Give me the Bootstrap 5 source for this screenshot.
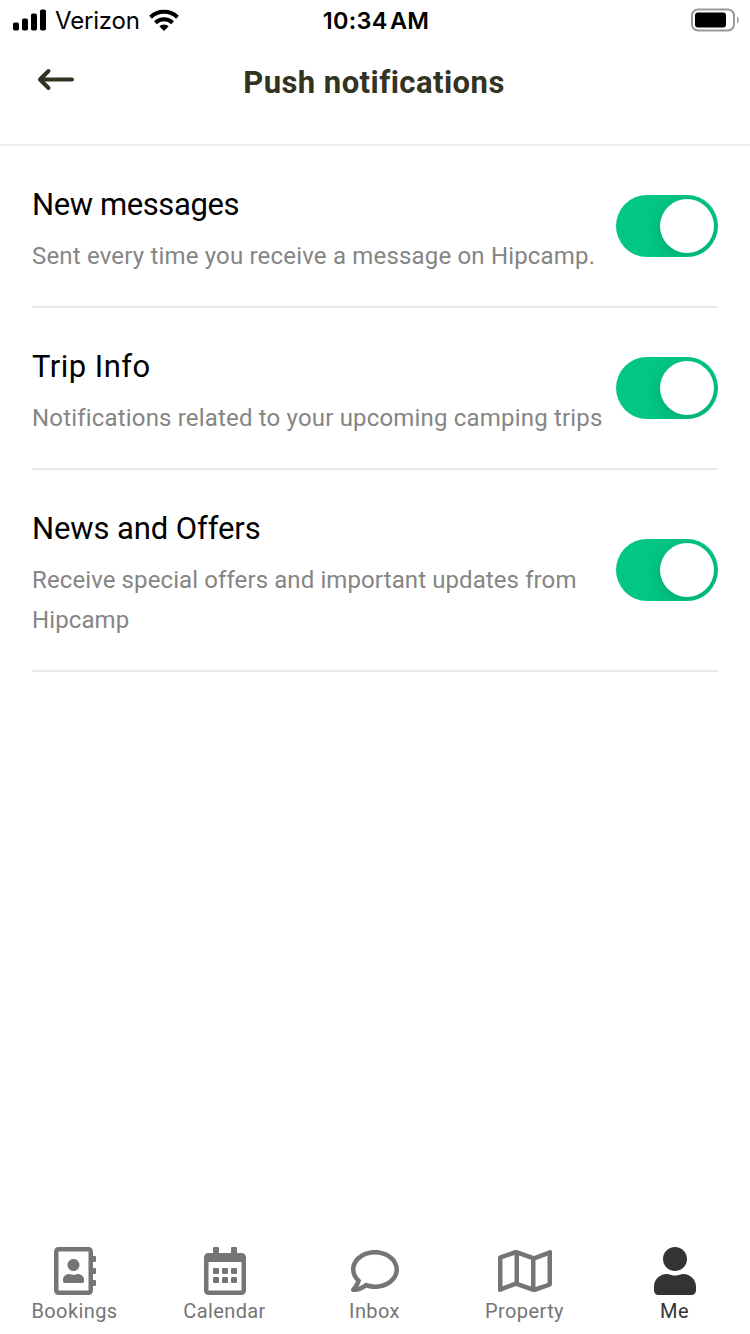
<!DOCTYPE html>
<html lang="en">
<head>
<meta charset="utf-8">
<meta name="viewport" content="width=device-width, initial-scale=1">
<title>Push notifications</title>
<link href="https://cdn.jsdelivr.net/npm/bootstrap@5.3.0/dist/css/bootstrap.min.css" rel="stylesheet">
<style>
  body { font-family: Roboto, "Liberation Sans", sans-serif; color: #000; background: #fff; }
  svg { display: block; }
  .status-bar { height: 40px; padding: 0 11px 0 13px; font-family: Inter, sans-serif; font-size: 24px; line-height: 38px; }
  .status-side { flex: 1 1 0; }
  .carrier { margin-left: 9px; margin-right: 9px; padding-top: 2px; letter-spacing: -.2px; }
  .clock { font-weight: 600; font-size: 23.500px; letter-spacing: .3px; word-spacing: -4px; padding-top: 2px; }
  .app-header { height: 106px; border-bottom: 2px solid #eeeee9; padding: 20px 32px 0; color: #333322; }
  .header-side { width: 80px; padding: 8px 0 0 5px; }
  .app-title { font-size: 31px; line-height: 46px; font-weight: 700; letter-spacing: .45px; margin: 0; position: relative; left: -1px; }
  .settings { padding: 0 32px; }
  .setting { padding: 30px 0; border-bottom: 2px solid #e9e9e9; }
  .setting-name { font-size: 31px; line-height: 58px; font-weight: 400; letter-spacing: -.1px; margin: 0 0 2px; }
  .name-messages { letter-spacing: -.4px; }
  .name-trip { letter-spacing: .45px; }
  .setting-note { font-size: 24px; line-height: 40px; color: #858585; letter-spacing: .18px; margin: 0; }
  .note-offers { letter-spacing: .1px; }
  .switch-btn { width: 102px; height: 62px; border: 0; border-radius: 31px; padding: 4px; background: #02c684; overflow: hidden; }
  .switch-knob { display: block; width: 54px; height: 54px; margin-left: 40px; border-radius: 50%; background: #fff; box-shadow: 0 4px 16px rgba(0,0,0,.15); }
  .tab-bar { height: 87px; color: #757575; }
  .tab-item { flex: 1 1 0; color: inherit; text-decoration: none; font-size: 20px; line-height: 32px; letter-spacing: .4px; }
  .tab-item span { margin-right: 1px; }
  .tab-item.active { color: #333; }
  .tab-item svg { height: 48px; fill: currentColor; }
</style>
</head>
<body>
<div class="d-flex flex-column vh-100">
  <div class="status-bar d-flex align-items-center">
    <div class="status-side d-flex align-items-center">
      <svg width="33" height="22" viewBox="0 0 33 22"><rect y="13.500" width="6" height="8" rx="1.800"/><rect x="9" y="9.500" width="6" height="12" rx="1.800"/><rect x="18" y="4.500" width="6" height="17" rx="1.800"/><rect x="27" y=".5" width="6" height="21" rx="1.800"/></svg>
      <span class="carrier">Verizon</span>
      <svg width="30" height="22" viewBox="0 0 30 22"><g fill="none" stroke="#000" stroke-width="4"><path d="M1.500 8.300a19.500 19.500 0 0 1 27 0"/><path d="M6.400 13.700a12.300 12.300 0 0 1 17.200 0"/></g><path d="M10.300 17.300a6.800 6.800 0 0 1 9.400 0L15 22z"/></svg>
    </div>
    <div class="clock">10:34 AM</div>
    <div class="status-side d-flex justify-content-end">
      <svg width="48" height="24" viewBox="0 0 48 24"><rect x="1" y="1.500" width="42" height="21" rx="6" fill="none" stroke="#999" stroke-width="2"/><rect x="4" y="4.500" width="31" height="15" rx="3"/><path d="M46 8.500c2.300 1 2.300 6 0 7z" fill="#999"/></svg>
    </div>
  </div>

  <header class="app-header d-flex justify-content-between align-items-start">
    <div class="header-side">
      <svg width="38" height="23" viewBox="0 0 38 23" fill="none" stroke="#333322" stroke-width="4" stroke-linecap="round" stroke-linejoin="round"><path d="M35 11.500H3M11.500 3 3 11.500l8.500 8.500"/></svg>
    </div>
    <h1 class="app-title">Push notifications</h1>
    <div class="header-side"></div>
  </header>

  <main class="settings flex-grow-1">
    <section class="setting d-flex align-items-center justify-content-between">
      <div><h2 class="setting-name name-messages">New messages</h2><p class="setting-note">Sent every time you receive a message on Hipcamp.</p></div>
      <button class="switch-btn flex-shrink-0" type="button" role="switch" aria-checked="true" aria-label="New messages"><span class="switch-knob"></span></button>
    </section>
    <section class="setting d-flex align-items-center justify-content-between">
      <div><h2 class="setting-name name-trip">Trip Info</h2><p class="setting-note">Notifications related to your upcoming camping trips</p></div>
      <button class="switch-btn flex-shrink-0" type="button" role="switch" aria-checked="true" aria-label="Trip Info"><span class="switch-knob"></span></button>
    </section>
    <section class="setting d-flex align-items-center justify-content-between">
      <div><h2 class="setting-name">News and Offers</h2><p class="setting-note note-offers">Receive special offers and important updates from<br>Hipcamp</p></div>
      <button class="switch-btn flex-shrink-0" type="button" role="switch" aria-checked="true" aria-label="News and Offers"><span class="switch-knob"></span></button>
    </section>
  </main>

  <nav class="tab-bar d-flex flex-shrink-0">
    <a class="tab-item d-flex flex-column align-items-center" href="#">
      <svg viewBox="0 0 448 512"><path d="M436 160c6.600 0 12-5.400 12-12v-40c0-6.600-5.400-12-12-12h-20V48c0-26.500-21.500-48-48-48H48C21.500 0 0 21.500 0 48v416c0 26.500 21.500 48 48 48h320c26.500 0 48-21.500 48-48v-48h20c6.600 0 12-5.400 12-12v-40c0-6.600-5.400-12-12-12h-20v-64h20c6.600 0 12-5.400 12-12v-40c0-6.600-5.400-12-12-12h-20v-64h20zm-68 304H48V48h320v416zM208 256c35.300 0 64-28.700 64-64s-28.700-64-64-64-64 28.700-64 64 28.700 64 64 64zm-89.600 128h179.200c12.400 0 22.400-8.600 22.400-19.200v-19.200c0-31.800-30.100-57.600-67.200-57.600-10.800 0-18.700 8-44.800 8-26.900 0-33.400-8-44.800-8-37.100 0-67.200 25.800-67.200 57.600v19.200c0 10.600 10 19.200 22.400 19.200z"/></svg>
      <span>Bookings</span>
    </a>
    <a class="tab-item d-flex flex-column align-items-center" href="#">
      <svg viewBox="0 0 448 512"><path d="M448 112v352c0 26.500-21.500 48-48 48H48c-26.500 0-48-21.500-48-48V112c0-26.500 21.500-48 48-48h48V12c0-6.600 5.400-12 12-12h40c6.600 0 12 5.400 12 12v52h128V12c0-6.600 5.400-12 12-12h40c6.600 0 12 5.400 12 12v52h48c26.500 0 48 21.500 48 48zm-48 346V160H48v298c0 3.300 2.700 6 6 6h340c3.300 0 6-2.700 6-6z"/><rect x="96" y="224" width="64" height="64" rx="12"/><rect x="192" y="224" width="64" height="64" rx="12"/><rect x="288" y="224" width="64" height="64" rx="12"/><rect x="96" y="320" width="64" height="64" rx="12"/><rect x="192" y="320" width="64" height="64" rx="12"/><rect x="288" y="320" width="64" height="64" rx="12"/></svg>
      <span>Calendar</span>
    </a>
    <a class="tab-item d-flex flex-column align-items-center" href="#">
      <svg viewBox="0 0 512 512"><path d="M256 32C114.600 32 0 125.100 0 240c0 47.600 19.900 91.200 52.900 126.300C38 405.700 7 439.100 6.500 439.500c-6.600 7-8.400 17.200-4.600 26S14.400 480 24 480c61.500 0 110-25.700 139.100-46.300C192 442.800 223.200 448 256 448c141.400 0 256-93.100 256-208S397.400 32 256 32zm0 368c-26.700 0-53.100-4.100-78.400-12.100l-22.700-7.200-19.500 13.800c-14.300 10.100-33.900 21.400-57.500 29 7.300-12.100 14.400-25.700 19.900-40.200l10.600-28.100-20.600-21.800C69.700 314.100 48 282.200 48 240c0-88.200 93.300-160 208-160s208 71.800 208 160-93.300 160-208 160z"/></svg>
      <span>Inbox</span>
    </a>
    <a class="tab-item d-flex flex-column align-items-center" href="#">
      <svg viewBox="0 0 576 512"><path d="M560.020 32c-1.960 0-3.980.370-5.960 1.160L384.010 96H384L212 35.280A64.252 64.252 0 0 0 191.760 32c-6.690 0-13.370 1.050-19.810 3.140L20.120 87.950A32.006 32.006 0 0 0 0 117.660v346.320C0 473.170 7.530 480 15.990 480c1.960 0 3.970-.370 5.960-1.160L192 416l172 60.710a63.980 63.980 0 0 0 40.050.150l151.830-52.810A31.996 31.996 0 0 0 576 394.340V48.020c0-9.190-7.530-16.020-15.980-16.020zM224 90.420l128 45.190v285.970l-128-45.190V90.420zM48 418.050V129.070l128-44.530v286.200l-.640.230L48 418.050zm480-35.130l-128 44.530V141.260l.640-.240L528 93.950v288.970z"/></svg>
      <span>Property</span>
    </a>
    <a class="tab-item active d-flex flex-column align-items-center" href="#" aria-current="page">
      <svg viewBox="0 0 448 512"><path d="M224 256c70.700 0 128-57.300 128-128S294.700 0 224 0 96 57.300 96 128s57.300 128 128 128zm89.600 32h-16.700c-22.200 10.200-46.900 16-72.900 16s-50.600-5.800-72.900-16h-16.700C60.200 288 0 348.200 0 422.400V464c0 26.500 21.500 48 48 48h352c26.500 0 48-21.500 48-48v-41.600c0-74.200-60.200-134.400-134.400-134.400z"/></svg>
      <span>Me</span>
    </a>
  </nav>
</div>
<script src="https://cdn.jsdelivr.net/npm/bootstrap@5.3.0/dist/js/bootstrap.bundle.min.js"></script>
</body>
</html>
